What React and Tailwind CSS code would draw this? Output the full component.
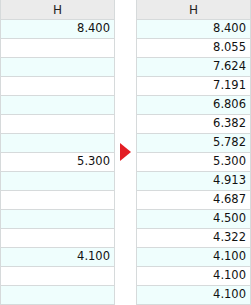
import React from "react";

const leftValues = ["8.400", "", "", "", "", "", "", "5.300", "", "", "", "", "4.100", "", ""];
const rightValues = ["8.400", "8.055", "7.624", "7.191", "6.806", "6.382", "5.782", "5.300", "4.913", "4.687", "4.500", "4.322", "4.100", "4.100", "4.100"];

function Column({ values }) {
    return (
        <div className="w-[115px] border-x border-[#d6dadb] flex flex-col">
            <div className="h-[20px] bg-[#ebebeb] border-b border-[#d6dadb] flex items-center justify-center text-[#222] text-[12px]">
                H
            </div>
            {values.map((v, i) => (
                <div
                    key={i}
                    className={`h-[19px] border-b border-[#d6dadb] flex items-center justify-end pr-[4px] text-[#111] ${i % 2 === 0 ? "bg-[#effefd]" : "bg-white"}`}
                >
                    {v}
                </div>
            ))}
        </div>
    );
}

function App() {
    return (
        <div className="w-[251px] h-[305px] bg-white flex text-[11.5px] leading-none" style={{ fontFamily: '"DejaVu Sans", Verdana, sans-serif' }}>
            <Column values={leftValues} />
            <div className="w-[21px] flex items-center justify-center pb-[1px]">
                <svg width="11" height="18" viewBox="0 0 11 18">
                    <polygon points="0,0 11,9 0,18" fill="#e31e24" />
                </svg>
            </div>
            <Column values={rightValues} />
        </div>
    );
}

export default App;
